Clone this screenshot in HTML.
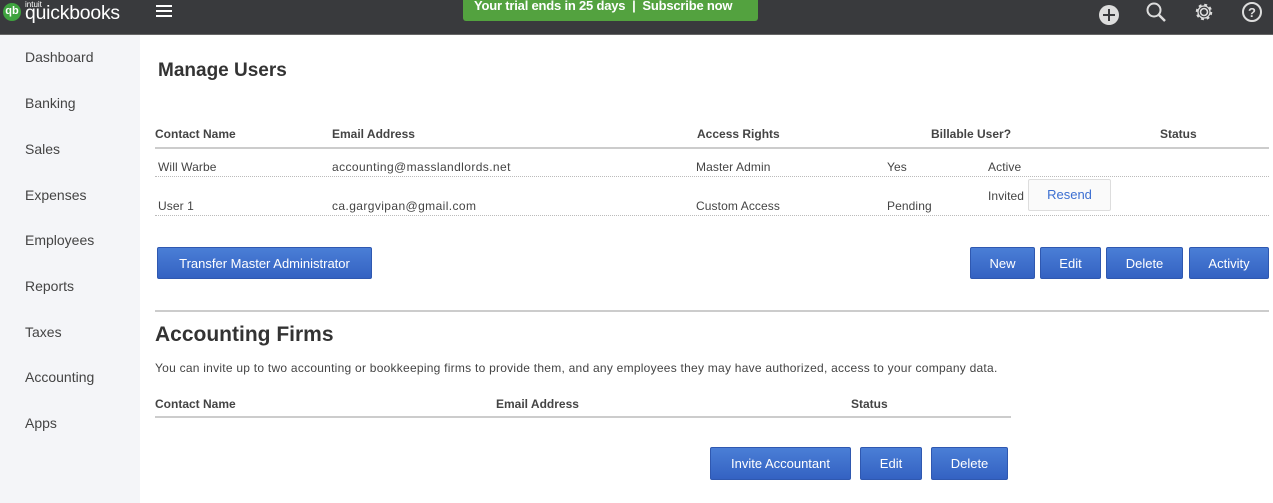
<!DOCTYPE html>
<html><head><meta charset="utf-8"><style>
*{margin:0;padding:0;box-sizing:border-box}
body{width:1273px;height:503px;position:relative;overflow:hidden;background:#fff;font-family:"Liberation Sans",Arial,sans-serif;color:#333}
.a{position:absolute;white-space:nowrap}
#top{left:0;top:0;width:1273px;height:35px;background:#393a3d;border-bottom:1px solid #666}
#side{left:0;top:35px;width:140px;height:468px;background:#f4f5f8}
.nav{left:25px;font-size:14px;color:#444}
.th{font-size:12px;font-weight:bold;color:#444}
.td{font-size:12px;color:#444;letter-spacing:.1px}
.btn{background:linear-gradient(#4a7ed6,#3462c2);color:#fff;font-size:13px;text-align:center;border-radius:2px;border:1px solid #2f58b0;display:flex;align-items:center;justify-content:center}
.dot{height:0;border-top:1px dotted #bbb}
</style></head><body>
<div class="a" id="top"></div>
<div class="a" style="left:3px;top:3px;width:18px;height:18px;border-radius:50%;background:#3fa33f;color:#fff;font-size:11px;font-weight:bold;text-align:center;line-height:17px">qb</div>
<div class="a" style="left:25px;top:0px;font-size:8px;color:#fff">intuit</div>
<div class="a" style="left:25px;top:3px;font-size:19px;color:#fff;letter-spacing:-.2px;transform:scaleX(1.02);transform-origin:left">quickbooks</div>
<div class="a" style="left:156px;top:5px;width:16px;height:2px;background:#fff;box-shadow:0 5px 0 #fff,0 10px 0 #fff"></div>
<div class="a" style="left:463px;top:0;width:295px;height:21px;background:#53a23f;border-radius:0 0 3px 3px;color:#fff;font-size:13px;font-weight:bold;line-height:11px;padding-left:11px;letter-spacing:-.2px">Your trial ends in 25 days &nbsp;|&nbsp; Subscribe now</div>
<svg class="a" style="left:1098px;top:4px" width="22" height="22"><circle cx="11" cy="11" r="10" fill="#ddd"/><path d="M11 5v12M5 11h12" stroke="#393a3d" stroke-width="2"/></svg>
<svg class="a" style="left:1145px;top:1px" width="24" height="22"><circle cx="9" cy="9" r="6.5" fill="none" stroke="#ddd" stroke-width="2"/><path d="M14 14l6 6" stroke="#ddd" stroke-width="2.5"/></svg>
<svg class="a" style="left:1193px;top:1px" width="22" height="22"><circle cx="11" cy="11" r="3.5" fill="none" stroke="#ddd" stroke-width="1.6"/><circle cx="11" cy="11" r="7" fill="none" stroke="#ddd" stroke-width="2.5" stroke-dasharray="2.8 2.7"/><circle cx="11" cy="11" r="6" fill="none" stroke="#ddd" stroke-width="1.3"/></svg>
<svg class="a" style="left:1241px;top:1px" width="22" height="22"><circle cx="11" cy="11" r="9" fill="none" stroke="#ddd" stroke-width="2"/><text x="11" y="16" font-size="13" font-weight="bold" fill="#ddd" text-anchor="middle" font-family="Liberation Sans">?</text></svg>
<div class="a" id="side"></div>
<div class="a nav" style="top:49px">Dashboard</div>
<div class="a nav" style="top:95px">Banking</div>
<div class="a nav" style="top:141px">Sales</div>
<div class="a nav" style="top:187px">Expenses</div>
<div class="a nav" style="top:232px">Employees</div>
<div class="a nav" style="top:278px">Reports</div>
<div class="a nav" style="top:324px">Taxes</div>
<div class="a nav" style="top:369px">Accounting</div>
<div class="a nav" style="top:415px">Apps</div>

<div class="a" style="left:158px;top:60px;font-size:19px;font-weight:bold;color:#333">Manage Users</div>
<div class="a th" style="left:155px;top:127px">Contact Name</div>
<div class="a th" style="left:332px;top:127px">Email Address</div>
<div class="a th" style="left:697px;top:127px">Access Rights</div>
<div class="a th" style="left:931px;top:127px">Billable User?</div>
<div class="a th" style="left:1160px;top:127px">Status</div>
<div class="a" style="left:155px;top:147px;width:1114px;height:2px;background:#ccc"></div>
<div class="a td" style="left:158px;top:160px">Will Warbe</div>
<div class="a td" style="left:332px;top:160px;letter-spacing:.4px">accounting@masslandlords.net</div>
<div class="a td" style="left:696px;top:160px">Master Admin</div>
<div class="a td" style="left:887px;top:160px">Yes</div>
<div class="a td" style="left:988px;top:160px">Active</div>
<div class="a dot" style="left:155px;top:176px;width:1114px"></div>
<div class="a td" style="left:158px;top:199px">User 1</div>
<div class="a td" style="left:332px;top:199px;letter-spacing:.4px">ca.gargvipan@gmail.com</div>
<div class="a td" style="left:696px;top:199px">Custom Access</div>
<div class="a td" style="left:887px;top:199px">Pending</div>
<div class="a td" style="left:988px;top:189px">Invited</div>
<div class="a" style="left:1028px;top:179px;width:83px;height:32px;border:1px solid #ddd;border-radius:2px;background:#fafafa;color:#3c6fd1;font-size:13px;text-align:center;line-height:30px">Resend</div>
<div class="a dot" style="left:155px;top:215px;width:1114px"></div>

<div class="a btn" style="left:157px;top:247px;width:215px;height:32px">Transfer Master Administrator</div>
<div class="a btn" style="left:970px;top:247px;width:65px;height:32px">New</div>
<div class="a btn" style="left:1040px;top:247px;width:61px;height:32px">Edit</div>
<div class="a btn" style="left:1106px;top:247px;width:77px;height:32px">Delete</div>
<div class="a btn" style="left:1189px;top:247px;width:80px;height:32px">Activity</div>

<div class="a" style="left:155px;top:310px;width:1114px;height:2px;background:#ccc"></div>
<div class="a" style="left:155px;top:323px;font-size:21px;font-weight:bold;color:#333">Accounting Firms</div>
<div class="a td" style="left:155px;top:361px;letter-spacing:.25px">You can invite up to two accounting or bookkeeping firms to provide them, and any employees they may have authorized, access to your company data.</div>
<div class="a th" style="left:155px;top:397px">Contact Name</div>
<div class="a th" style="left:496px;top:397px">Email Address</div>
<div class="a th" style="left:851px;top:397px">Status</div>
<div class="a" style="left:155px;top:416px;width:856px;height:2px;background:#ccc"></div>
<div class="a btn" style="left:710px;top:447px;width:141px;height:33px">Invite Accountant</div>
<div class="a btn" style="left:860px;top:447px;width:62px;height:33px">Edit</div>
<div class="a btn" style="left:931px;top:447px;width:77px;height:33px">Delete</div>
</body></html>
